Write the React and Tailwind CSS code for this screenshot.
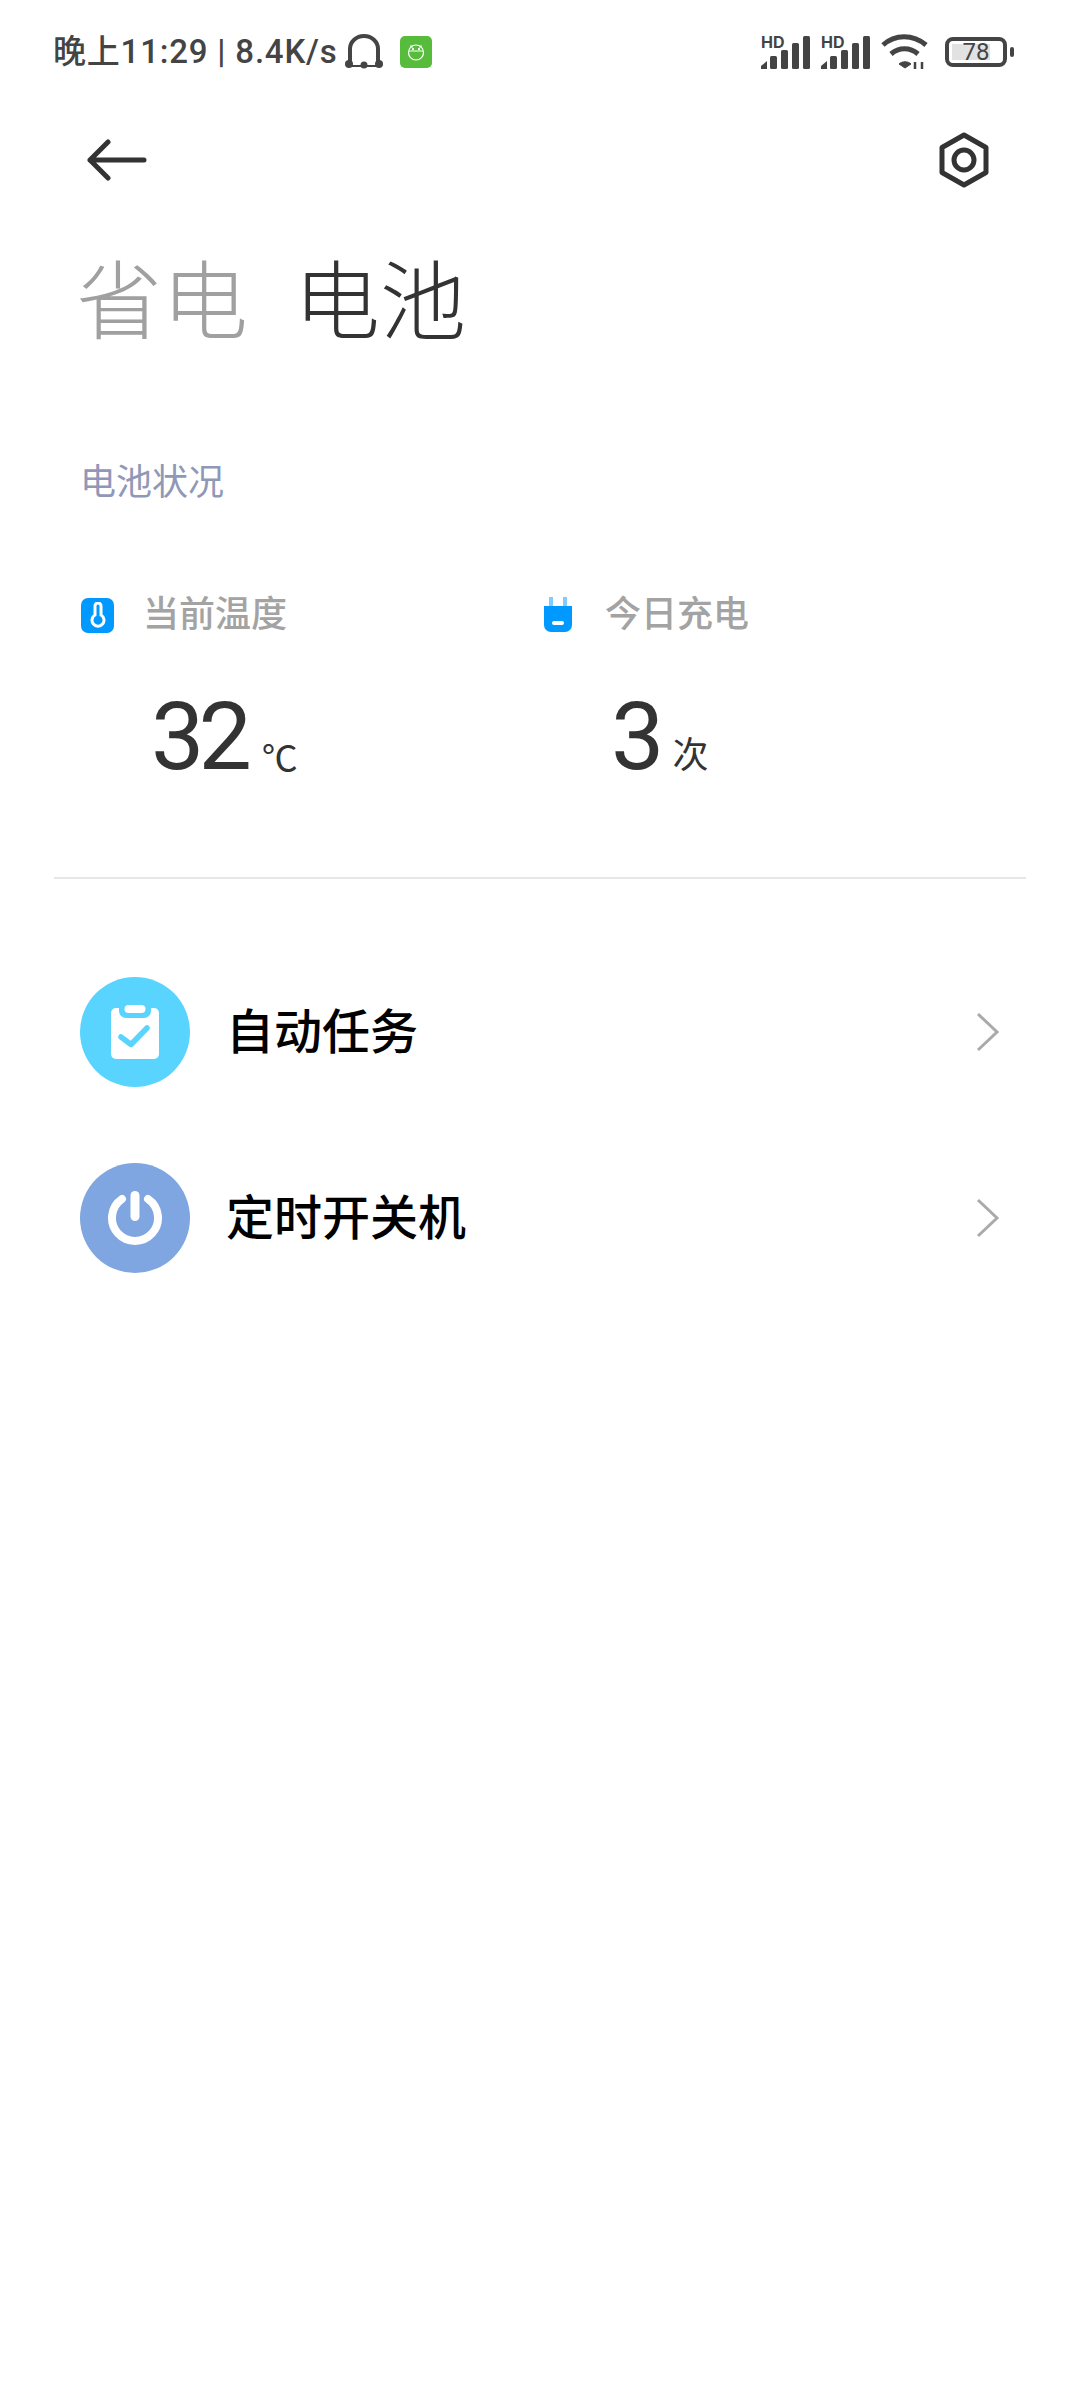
import React from 'react';

const CJK = "font-['Roboto','Noto_Sans_CJK_SC',sans-serif]";

const SignalIcon = () => (
  <div className="relative h-[36px] w-[52px]">
    <span className="absolute left-[2px] top-0 text-[16px] font-bold leading-[16px] text-[#444] font-['Inter',sans-serif]">HD</span>
    <svg width="52" height="36" viewBox="0 0 52 36" fill="#444">
      <path d="M2 35v-3l6-5v8z" />
      <rect x="11" y="22" width="7" height="13" rx="1.5" />
      <rect x="22" y="16" width="7" height="19" rx="1.5" />
      <rect x="33" y="9" width="7" height="26" rx="1.5" />
      <rect x="44" y="2" width="7" height="33" rx="1.5" />
    </svg>
  </div>
);

const StatusBar = () => (
  <div className="flex h-[104px] items-center justify-between pl-[53px] pr-[66px]">
    <div className="flex items-center text-[#444]">
      <span className={`${CJK} text-[33px] font-medium leading-[50px] tracking-[0.8px]`}>晚上11:29 | 8.4K/s</span>
      <svg className="ml-[6px]" width="40" height="38" viewBox="0 0 40 38" fill="none">
        <path d="M6 30V16a14 13 0 0 1 28 0v14" stroke="#444" strokeWidth="4" />
        <circle cx="5" cy="31" r="4" fill="#444" />
        <circle cx="35" cy="31" r="4" fill="#444" />
        <circle cx="20" cy="32" r="3.5" fill="#444" />
        <path d="M5 33h30" stroke="#444" strokeWidth="2" />
      </svg>
      <div className="ml-[16px] flex h-[32px] w-[32px] items-center justify-center rounded-[5px] bg-[#57bb3c]">
        <svg width="20" height="20" viewBox="0 0 20 20" fill="none" stroke="#fff" strokeWidth="1.2">
          <circle cx="10" cy="10.5" r="7.5" />
          <path d="M3 9h14M4.5 3.5l2 2M15.5 3.5l-2 2" />
          <circle cx="7" cy="7" r=".5" fill="#fff" />
          <circle cx="13" cy="7" r=".5" fill="#fff" />
        </svg>
      </div>
    </div>
    <div className="flex items-center">
      <SignalIcon />
      <div className="ml-[8px]"><SignalIcon /></div>
      <svg className="ml-[10px]" width="48" height="36" viewBox="0 0 48 36" fill="none" stroke="#444" strokeWidth="5">
        <path d="M2 11C14 0 32 0 45 11" />
        <path d="M10 20c8-7 19-7 27 0" />
        <path d="M24 34l-6-4c3-3 9-3 12 0z" fill="#444" strokeWidth="1" />
        <path d="M34 28v7M41 28v7" strokeWidth="2.5" />
      </svg>
      <div className="relative ml-[16px] flex h-[30px] w-[62px] items-center rounded-[8px] border-[4px] border-[#444] px-[3px] py-[3px]">
        <div className="h-full w-[38px] bg-[#e2e2e2]" />
        <span className="absolute inset-0 text-center text-[24px] leading-[22px] text-[#444] font-['Roboto',sans-serif]">78</span>
      </div>
      <div className="ml-[3px] h-[10px] w-[4px] rounded-[2px] bg-[#444]" />
    </div>
  </div>
);

const Stat = ({ icon, label, labelClass, value, unit, unitClass }) => (
  <div className="flex-1">
    <div className="flex h-[40px] items-center">
      {icon}
      <span className={`${CJK} text-[36px] font-medium leading-[40px] text-[#a3a3a3] ${labelClass}`}>{label}</span>
    </div>
    <div className="mt-[52px] flex items-end pl-[70px]">
      <span className="font-['Roboto',sans-serif] text-[95px] leading-[100px] tracking-[-6px] text-[#333]">{value}</span>
      <span className={`${CJK} text-[36px] text-[#333] ${unitClass}`}>{unit}</span>
    </div>
  </div>
);

const Chevron = () => (
  <svg width="24" height="40" viewBox="0 0 24 40" fill="none" stroke="#aaa" strokeWidth="3">
    <path d="M2 2l19 18L2 38" />
  </svg>
);

const Row = ({ bg, icon, label }) => (
  <div className="flex h-[110px] items-center pl-[80px] pr-[80px]">
    <div className={`flex h-[110px] w-[110px] items-center justify-center rounded-full ${bg}`}>{icon}</div>
    <span className={`${CJK} ml-[36px] flex-1 pt-[2px] text-[48px] font-medium text-black`}>{label}</span>
    <Chevron />
  </div>
);

export default function App() {
  return (
    <div className="min-h-[2400px] w-[1080px] bg-white">
      <StatusBar />

      {/* Toolbar */}
      <div className="mt-[26px] flex h-[60px] items-center justify-between pl-[87px] pr-[90px]">
        <svg width="60" height="42" viewBox="0 0 60 42" fill="none" stroke="#333" strokeWidth="5" strokeLinecap="round" strokeLinejoin="round">
          <path d="M21 3L3 21l18 18M3 21h54" />
        </svg>
        <svg width="52" height="56" viewBox="0 0 52 56" fill="none" stroke="#333" strokeWidth="5">
          <path d="M26 3l22 12.5v25L26 53 4 40.5v-25z" strokeLinejoin="round" />
          <circle cx="26" cy="28" r="10" />
        </svg>
      </div>

      {/* Tabs */}
      <div className="mt-[46px] flex pl-[76px] font-['Noto_Sans_CJK_SC',sans-serif] text-[86px] font-light leading-[120px]">
        <span className="text-[#a0a0a0]">省电</span>
        <span className="ml-[46px] text-[#333]">电池</span>
      </div>

      <div className={`${CJK} mt-[102px] pl-[80px] text-[36px] leading-[50px] text-[#8f98b8]`}>电池状况</div>

      {/* Stats */}
      <div className="mt-[87px] flex pl-[81px]">
        <Stat
          label="当前温度"
          labelClass="ml-[29px]"
          value="32"
          unit="℃"
          unitClass="ml-[16px] leading-[54px]"
          icon={
            <div className="flex h-[35px] w-[33px] items-center justify-center rounded-[7px] bg-[#0099ff]">
              <svg width="16" height="26" viewBox="0 0 16 26" fill="none" stroke="#fff" strokeWidth="3">
                <path d="M5 3a3 3 0 0 1 6 0v9a6 6 0 1 1-6 0z" transform="translate(0 1)" />
              </svg>
            </div>
          }
        />
        <div className="w-[539px]">
          <Stat
            label="今日充电"
            labelClass="ml-[32px]"
            value="3"
            unit="次"
            unitClass="ml-[14px] leading-[62px]"
            icon={
              <svg className="ml-[2px]" width="30" height="36" viewBox="0 0 30 36">
                <rect x="6" y="0" width="4" height="10" fill="#80ccff" />
                <rect x="20" y="0" width="4" height="10" fill="#80ccff" />
                <path d="M1 9h28v19a7 7 0 0 1-7 7H8a7 7 0 0 1-7-7z" fill="#0099ff" />
                <rect x="9" y="24" width="12" height="4" rx="2" fill="#fff" />
              </svg>
            }
          />
        </div>
      </div>

      <div className="mx-[54px] mt-[90px] h-[2px] bg-[#e6e6e6]" />

      {/* Rows */}
      <div className="mt-[98px] flex flex-col gap-[76px]">
        <Row
          bg="bg-[#59d4ff]"
          label="自动任务"
          icon={
            <svg width="48" height="54" viewBox="0 0 48 54">
              <rect x="0" y="3" width="48" height="51" rx="5" fill="#fff" />
              <rect x="8" y="-5" width="32" height="18" rx="7" fill="#59d4ff" />
              <rect x="13.5" y="0" width="21" height="8" rx="4" fill="#fff" />
              <path d="M10 32l10 7.5L36 23" fill="none" stroke="#59d4ff" strokeWidth="5.5" strokeLinecap="round" strokeLinejoin="round" />
            </svg>
          }
        />
        <Row
          bg="bg-[#7fa6e0]"
          label="定时开关机"
          icon={
            <svg width="56" height="54" viewBox="0 0 56 54" fill="none" stroke="#fff" strokeLinecap="round">
              <path d="M15 8a23 23 0 1 0 26 0" strokeWidth="8" />
              <path d="M28 4.5v21" strokeWidth="9" />
            </svg>
          }
        />
      </div>
    </div>
  );
}
